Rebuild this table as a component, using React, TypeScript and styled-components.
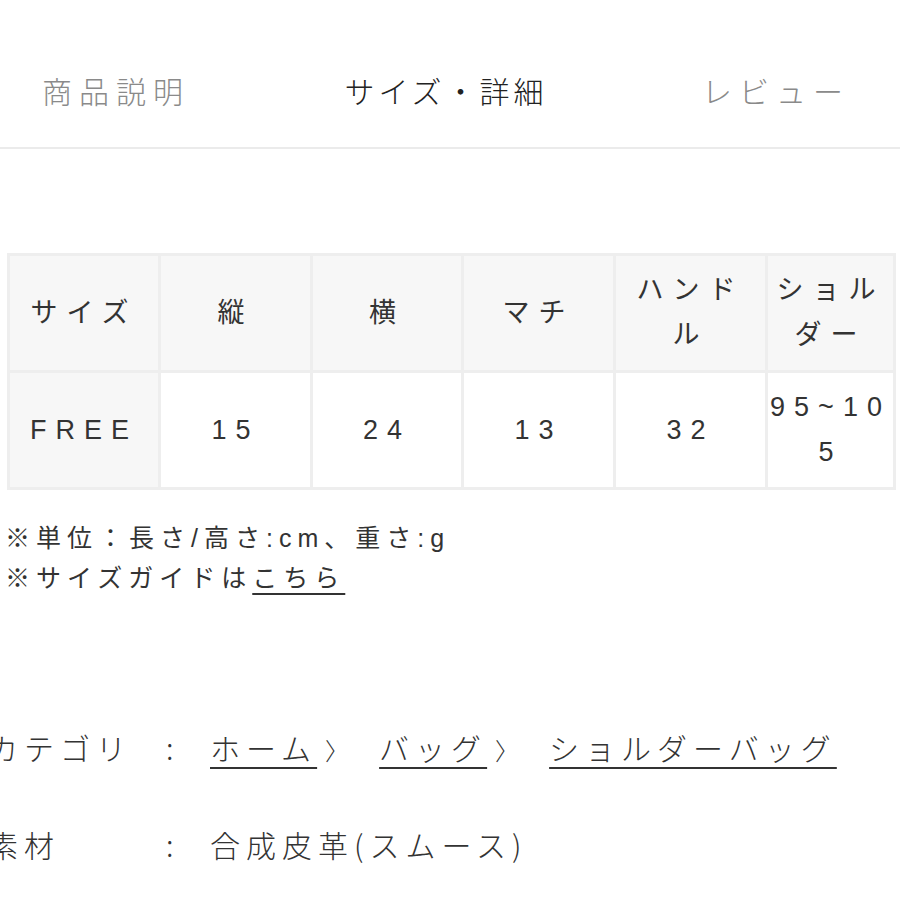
import styled, { createGlobalStyle } from "styled-components";

const GlobalStyle = createGlobalStyle`
  html, body {
    margin: 0;
    padding: 0;
    background: #ffffff;
  }
  body {
    font-family: "Liberation Sans", "Noto Sans CJK JP", sans-serif;
    color: #333333;
  }
`;

const Page = styled.div`
  width: 900px;
  height: 900px;
  overflow: hidden;
  background: #ffffff;
`;

const TabBar = styled.div`
  display: grid;
  grid-template-columns: repeat(3, 330px);
  margin-left: -49px;
  height: 147px;
  border-bottom: 2px solid #ebebeb;
`;

const Tab = styled.div<{ active?: boolean }>`
  display: flex;
  justify-content: center;
  padding-top: 68px;
  font-family: "Noto Sans CJK JP", sans-serif;
  font-size: 30px;
  line-height: 44px;
  font-weight: 300;
  letter-spacing: ${({ active }) => (active ? "4px" : "7px")};
  color: ${({ active }) => (active ? "#222222" : "#8a8a8a")};
`;

const TableArea = styled.div`
  padding: 104px 0 0 7px;
`;

const SizeTable = styled.table`
  width: 886px;
  table-layout: fixed;
  border-collapse: collapse;
  border: 3px solid #eeeeee;
`;

const Cell = styled.td<{ shaded?: boolean }>`
  height: 114px;
  padding: 0;
  border: 3px solid #eeeeee;
  background: ${({ shaded }) => (shaded ? "#f7f7f7" : "#ffffff")};
  text-align: center;
  vertical-align: middle;
  font-size: 27px;
  line-height: 45px;
  letter-spacing: 9px;
  white-space: nowrap;
  color: #333333;
`;

const Notes = styled.div`
  padding: 28px 0 0 5px;
  font-size: 25px;
  line-height: 40px;
  letter-spacing: 6px;
  color: #333333;
`;

const NoteLink = styled.span`
  text-decoration: underline;
  text-underline-offset: 6px;
  text-decoration-thickness: 2px;
`;

const InfoList = styled.div`
  display: flex;
  flex-direction: column;
  gap: 47px;
  margin: 124px 0 0 -12px;
  font-family: "Noto Sans CJK JP", sans-serif;
  font-size: 30px;
  font-weight: 300;
  letter-spacing: 6px;
  color: #333333;
`;

const InfoRow = styled.div`
  display: flex;
  align-items: center;
  height: 50px;
`;

const Label = styled.div`
  width: 178px;
  flex-shrink: 0;
`;

const Colon = styled.div`
  width: 44px;
  flex-shrink: 0;
`;

const Crumb = styled.span`
  text-decoration: underline;
  text-underline-offset: 7px;
  text-decoration-thickness: 2px;
  letter-spacing: 6px;
`;

const Chevron = styled.span`
  display: inline-block;
  margin: 0 30px 0 8px;
  font-size: 24px;
  letter-spacing: 0;
`;

const widths = [151, 152, 151, 152, 152, 128];

const headers: string[][] = [
  ["サイズ"],
  ["縦"],
  ["横"],
  ["マチ"],
  ["ハンド", "ル"],
  ["ショル", "ダー"],
];

const values: string[][] = [
  ["FREE"],
  ["15"],
  ["24"],
  ["13"],
  ["32"],
  ["95~10", "5"],
];

function Lines({ lines }: { lines: string[] }) {
  return (
    <>
      {lines.map((line, i) => (
        <div key={i}>{line}</div>
      ))}
    </>
  );
}

export default function App() {
  return (
    <Page>
      <GlobalStyle />
      <TabBar>
        <Tab>商品説明</Tab>
        <Tab active>サイズ・詳細</Tab>
        <Tab>レビュー</Tab>
      </TabBar>

      <TableArea>
        <SizeTable>
          <colgroup>
            {widths.map((w, i) => (
              <col key={i} style={{ width: w }} />
            ))}
          </colgroup>
          <tbody>
            <tr>
              {headers.map((h, i) => (
                <Cell key={i} shaded>
                  <Lines lines={h} />
                </Cell>
              ))}
            </tr>
            <tr>
              {values.map((v, i) => (
                <Cell key={i} shaded={i === 0}>
                  <Lines lines={v} />
                </Cell>
              ))}
            </tr>
          </tbody>
        </SizeTable>
      </TableArea>

      <Notes>
        <div>※単位：長さ/高さ:cm、重さ:g</div>
        <div>
          ※サイズガイドは<NoteLink>こちら</NoteLink>
        </div>
      </Notes>

      <InfoList>
        <InfoRow>
          <Label>カテゴリ</Label>
          <Colon>:</Colon>
          <div>
            <Crumb>ホーム</Crumb>
            <Chevron>〉</Chevron>
            <Crumb>バッグ</Crumb>
            <Chevron>〉</Chevron>
            <Crumb>ショルダーバッグ</Crumb>
          </div>
        </InfoRow>
        <InfoRow>
          <Label>素材</Label>
          <Colon>:</Colon>
          <div>合成皮革(スムース)</div>
        </InfoRow>
      </InfoList>
    </Page>
  );
}
